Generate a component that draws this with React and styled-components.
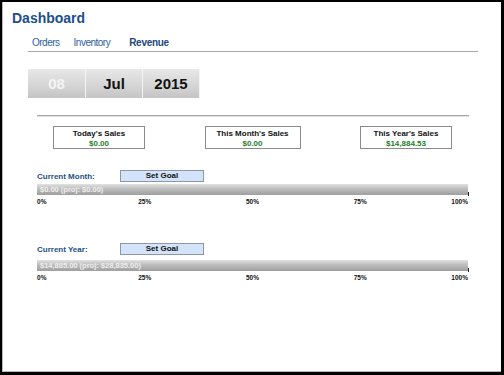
import React from 'react'
import styled, { createGlobalStyle } from 'styled-components'

const GlobalStyle = createGlobalStyle`
  html, body {
    margin: 0;
    padding: 0;
    background: #fff;
    font-family: "Liberation Sans", Arial, sans-serif;
  }
`

const Frame = styled.div`
  box-sizing: border-box;
  width: 504px;
  height: 375px;
  border-style: solid;
  border-color: #000;
  border-width: 2px 3px 3px 2px;
  background: #fff;
  overflow: hidden;
`

const Inner = styled.div`
  box-sizing: border-box;
  height: 100%;
  border-left: 1px solid #b8b8b8;
  border-bottom: 1px solid #b8b8b8;
  padding-top: 8px;
`

const Title = styled.h1`
  margin: 0 0 0 9px;
  font-size: 14px;
  line-height: 16px;
  font-weight: bold;
  color: #1d4f8d;
`

const Nav = styled.nav`
  display: flex;
  width: 450px;
  margin: 11px 0 0 25px;
  padding: 0 0 2px 4px;
  box-sizing: border-box;
  border-bottom: 1px solid #a8a8a8;
`

const NavLink = styled.a`
  font-size: 10px;
  line-height: 12px;
  margin-right: ${p => p.$gap}px;
  color: ${p => (p.$active ? '#21487f' : '#2d5f9e')};
  font-weight: ${p => (p.$active ? 'bold' : 'normal')};
  letter-spacing: ${p => (p.$active ? '-0.3px' : '-0.5px')};
  text-decoration: none;
`

const DateRow = styled.div`
  display: flex;
  margin: 17px 0 0 25px;
`

const DateCell = styled.div`
  width: ${p => p.$w}px;
  height: 29px;
  display: flex;
  align-items: center;
  justify-content: center;
  font-size: 15px;
  font-weight: bold;
  color: ${p => (p.$muted ? '#f4f4f4' : '#111')};
  background: linear-gradient(#e8e8e8, #d4d4d4 60%, #c4c4c4);
  border-right: 1px solid #f4f4f4;
`

const Divider = styled.div`
  height: 1px;
  margin: 17px 0 0 34px;
  width: 432px;
  background: #a8a8a8;
  box-shadow: 0 1px 0 #e0e0e0;
`

const SalesRow = styled.div`
  display: flex;
  justify-content: space-between;
  width: 432px;
  margin: 10px 0 0 34px;
  padding: 0 17px 0 16px;
  box-sizing: border-box;
`

const SalesBox = styled.div`
  box-sizing: border-box;
  width: ${p => p.$w}px;
  height: 23px;
  border: 1px solid #8a8a8a;
  display: flex;
  flex-direction: column;
  align-items: center;
  padding-top: 2px;
  font-size: 8px;
  line-height: 10px;
  font-weight: bold;
`

const SalesTitle = styled.div`
  color: #111;
`

const SalesValue = styled.div`
  color: #23802a;
`

const GoalSection = styled.section`
  width: 432px;
  margin: ${p => p.$top}px 0 0 34px;
`

const GoalHeader = styled.div`
  display: flex;
  align-items: center;
  height: 12px;
`

const GoalLabel = styled.div`
  width: 83px;
  font-size: 8px;
  font-weight: bold;
  color: #234f88;
`

const GoalButton = styled.button`
  box-sizing: border-box;
  width: 84px;
  height: 12px;
  padding: 0;
  border: 1px solid #8d97a6;
  background: #d3e3fa;
  font-family: inherit;
  font-size: 8px;
  font-weight: bold;
  color: #111;
  line-height: 10px;
`

const Bar = styled.div`
  position: relative;
  margin-top: ${p => p.$gap}px;
  height: 11px;
  width: 431px;
  background: linear-gradient(#e2e2e2, #c0c0c0 40%, #9e9e9e);
  display: flex;
  align-items: center;
  padding-left: 3px;
  box-sizing: border-box;
  font-size: 7.5px;
  font-weight: bold;
  color: #ededed;
  &::after {
    content: '';
    position: absolute;
    right: -1px;
    top: 8px;
    width: 1px;
    height: 4px;
    background: #222;
  }
`

const Scale = styled.div`
  position: relative;
  width: 431px;
  height: 8px;
  margin-top: 3px;
`

const ScaleLabel = styled.span`
  position: absolute;
  top: 0;
  font-size: 6.5px;
  line-height: 8px;
  font-weight: bold;
  color: #111;
  white-space: nowrap;
`

const ticks = [0, 25, 50, 75, 100]

function tickStyle (t) {
  if (t === 0) return { left: 0 }
  if (t === 100) return { right: 0 }
  return { left: `${t}%`, transform: 'translateX(-50%)' }
}

function Goal ({ label, text, top, gap }) {
  return (
    <GoalSection $top={top}>
      <GoalHeader>
        <GoalLabel>{label}</GoalLabel>
        <GoalButton>Set Goal</GoalButton>
      </GoalHeader>
      <Bar $gap={gap}>{text}</Bar>
      <Scale>
        {ticks.map(t => (
          <ScaleLabel key={t} style={tickStyle(t)}>{t}%</ScaleLabel>
        ))}
      </Scale>
    </GoalSection>
  )
}

export default function App () {
  return (
    <Frame>
      <GlobalStyle />
      <Inner>
        <Title>Dashboard</Title>
        <Nav>
          <NavLink $gap={14}>Orders</NavLink>
          <NavLink $gap={19}>Inventory</NavLink>
          <NavLink $active>Revenue</NavLink>
        </Nav>
        <DateRow>
          <DateCell $w={57} $muted>08</DateCell>
          <DateCell $w={56}>Jul</DateCell>
          <DateCell $w={56}>2015</DateCell>
        </DateRow>
        <Divider />
        <SalesRow>
          <SalesBox $w={92}>
            <SalesTitle>Today's Sales</SalesTitle>
            <SalesValue>$0.00</SalesValue>
          </SalesBox>
          <SalesBox $w={96}>
            <SalesTitle>This Month's Sales</SalesTitle>
            <SalesValue>$0.00</SalesValue>
          </SalesBox>
          <SalesBox $w={92}>
            <SalesTitle>This Year's Sales</SalesTitle>
            <SalesValue>$14,884.53</SalesValue>
          </SalesBox>
        </SalesRow>
        <Goal label='Current Month:' text='$0.00 (proj: $0.00)' top={21} gap={2} />
        <Goal label='Current Year:' text='$14,885.00 (proj: $28,835.00)' top={37} gap={5} />
      </Inner>
    </Frame>
  )
}
